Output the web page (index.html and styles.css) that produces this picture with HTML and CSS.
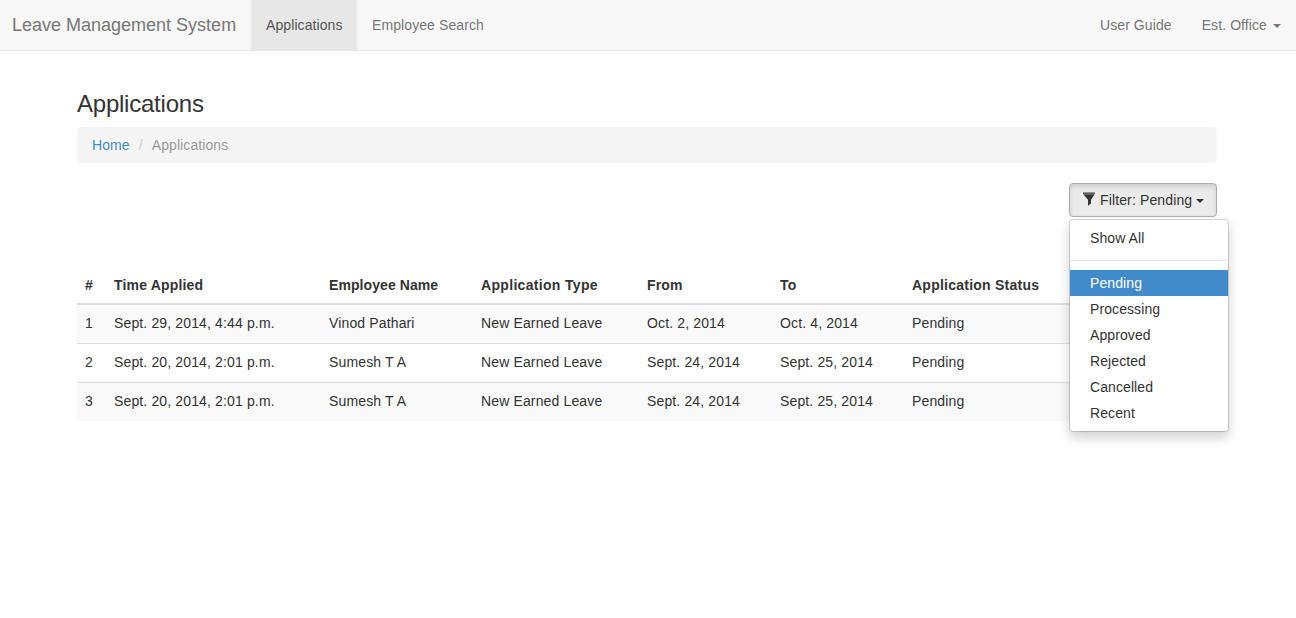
FILE: index.html
```html
<!DOCTYPE html>
<html lang="en">
<head>
<meta charset="utf-8">
<title>Leave Management System</title>
<link rel="stylesheet" href="styles.css">
</head>
<body>
<nav class="navbar">
  <a class="brand"><span class="brand-text">Leave Management System</span></a>
  <a class="nav-link active"><span>Applications</span></a>
  <a class="nav-link"><span>Employee Search</span></a>
  <div class="nav-right">
    <a class="nav-link">User Guide</a>
    <a class="nav-link">Est. Office<i class="caret nav-caret"></i></a>
  </div>
</nav>
<main class="container">
  <h3 class="title">Applications</h3>
  <ol class="breadcrumb">
    <li><a class="crumb-link">Home</a></li>
    <li class="crumb-sep">/</li>
    <li class="crumb-current">Applications</li>
  </ol>
  <div class="toolbar">
    <div class="dropdown">
      <button class="btn" type="button">
        <svg class="filter-icon" width="14" height="14" viewBox="0 0 14 14"><path d="M1 .5h12v1.200H1zM1.300 2.200h11.400L9 7.700V11.500L6 13.800V7.700z" fill="#333"/></svg>
        <span class="btn-label">Filter: Pending</span><i class="caret"></i>
      </button>
      <ul class="menu">
        <li class="item">Show All</li>
        <li class="divider"></li>
        <li class="item selected">Pending</li>
        <li class="item">Processing</li>
        <li class="item">Approved</li>
        <li class="item">Rejected</li>
        <li class="item">Cancelled</li>
        <li class="item">Recent</li>
      </ul>
    </div>
  </div>
  <table class="table">
    <colgroup><col class="c-num"><col class="c-time"><col class="c-name"><col class="c-type"><col class="c-from"><col class="c-to"><col></colgroup>
    <thead>
      <tr><th>#</th><th>Time Applied</th><th class="th-name">Employee Name</th><th class="th-type">Application Type</th><th>From</th><th>To</th><th class="th-status">Application Status</th></tr>
    </thead>
    <tbody>
      <tr><td>1</td><td>Sept. 29, 2014, 4:44 p.m.</td><td>Vinod Pathari</td><td>New Earned Leave</td><td>Oct. 2, 2014</td><td>Oct. 4, 2014</td><td>Pending</td></tr>
      <tr><td>2</td><td>Sept. 20, 2014, 2:01 p.m.</td><td>Sumesh T A</td><td>New Earned Leave</td><td>Sept. 24, 2014</td><td>Sept. 25, 2014</td><td>Pending</td></tr>
      <tr><td>3</td><td>Sept. 20, 2014, 2:01 p.m.</td><td>Sumesh T A</td><td>New Earned Leave</td><td>Sept. 24, 2014</td><td>Sept. 25, 2014</td><td>Pending</td></tr>
    </tbody>
  </table>
</main>
</body>
</html>
```

FILE: styles.css
```css
* { box-sizing: border-box; }
body {
  margin: 0;
  min-height: 618px;
  background: #fff;
  color: #333;
  font: 14px/20px "Liberation Sans", Arial, sans-serif;
  letter-spacing: .09px;
}
.navbar {
  display: flex;
  height: 51px;
  background: #f8f8f8;
  border-bottom: 1px solid #e7e7e7;
  color: #777;
}
.brand { width: 251px; padding: 15px 0 15px 12px; font-size: 18px; letter-spacing: 0; white-space: nowrap; }
.nav-link { padding: 15px; white-space: nowrap; }
.active { width: 106px; background: #e7e7e7; color: #555; }
.nav-right { display: flex; margin-left: auto; }
.caret {
  display: inline-block;
  border: 4px solid transparent;
  border-top-color: currentColor;
  border-bottom: 0;
  vertical-align: middle;
}
.nav-caret { margin-left: 6px; }
.container { width: 1140px; margin-left: 77px; padding-top: 40px; }
.title { margin: 0 0 10px; font-size: 24px; line-height: 26px; font-weight: 500; letter-spacing: -.23px; }
.breadcrumb {
  display: flex;
  height: 36px;
  margin: 0 0 20px;
  padding: 8px 15px;
  list-style: none;
  background: #f5f5f5;
  border-radius: 4px;
}
.crumb-link { color: #428bca; }
.crumb-sep { width: 22px; text-align: center; color: #ccc; }
.crumb-current { color: #999; }
.toolbar { display: flex; justify-content: flex-end; height: 84px; }
.dropdown { position: relative; width: 148px; height: 34px; }
.btn {
  display: flex;
  align-items: center;
  width: 148px;
  height: 34px;
  padding: 0 12px;
  font: inherit;
  letter-spacing: .13px;
  color: #333;
  background: #ebebeb;
  border: 1px solid #adadad;
  border-radius: 4px;
  box-shadow: inset 0 3px 5px rgba(0, 0, 0, .125);
}
.filter-icon { flex: none; margin: -3px 4px 0 0; }
.btn-label { margin-right: 4px; white-space: nowrap; }
.btn .caret { margin-top: 2px; }
.menu {
  position: absolute;
  top: 36px;
  left: 0;
  width: 160px;
  margin: 0;
  padding: 5px 0;
  list-style: none;
  background: #fff;
  background-clip: padding-box;
  border: 1px solid rgba(0, 0, 0, .15);
  border-radius: 4px;
  box-shadow: 0 6px 12px rgba(0, 0, 0, .175);
}
.item { padding: 3px 20px; }
.selected { background: #428bca; color: #fff; }
.divider { height: 1px; margin: 9px 0; background: #e5e5e5; }
.table { width: 1140px; table-layout: fixed; border-collapse: separate; border-spacing: 0; }
.c-num { width: 29px; }
.c-time { width: 215px; }
.c-name { width: 152px; }
.c-type { width: 166px; }
.c-from { width: 133px; }
.c-to { width: 132px; }
.table th { padding: 8px; text-align: left; border-bottom: 2px solid #ddd; letter-spacing: .18px; white-space: nowrap; }
.table .th-name { letter-spacing: .08px; }
.table .th-type { letter-spacing: .32px; }
.table .th-status { letter-spacing: .24px; }
.table td { padding: 8px 8px 10px; letter-spacing: .14px; white-space: nowrap; }
.table tbody tr + tr td { border-top: 1px solid #ddd; }
.table tbody tr:nth-child(odd) td { background: #f9f9f9; }
```
